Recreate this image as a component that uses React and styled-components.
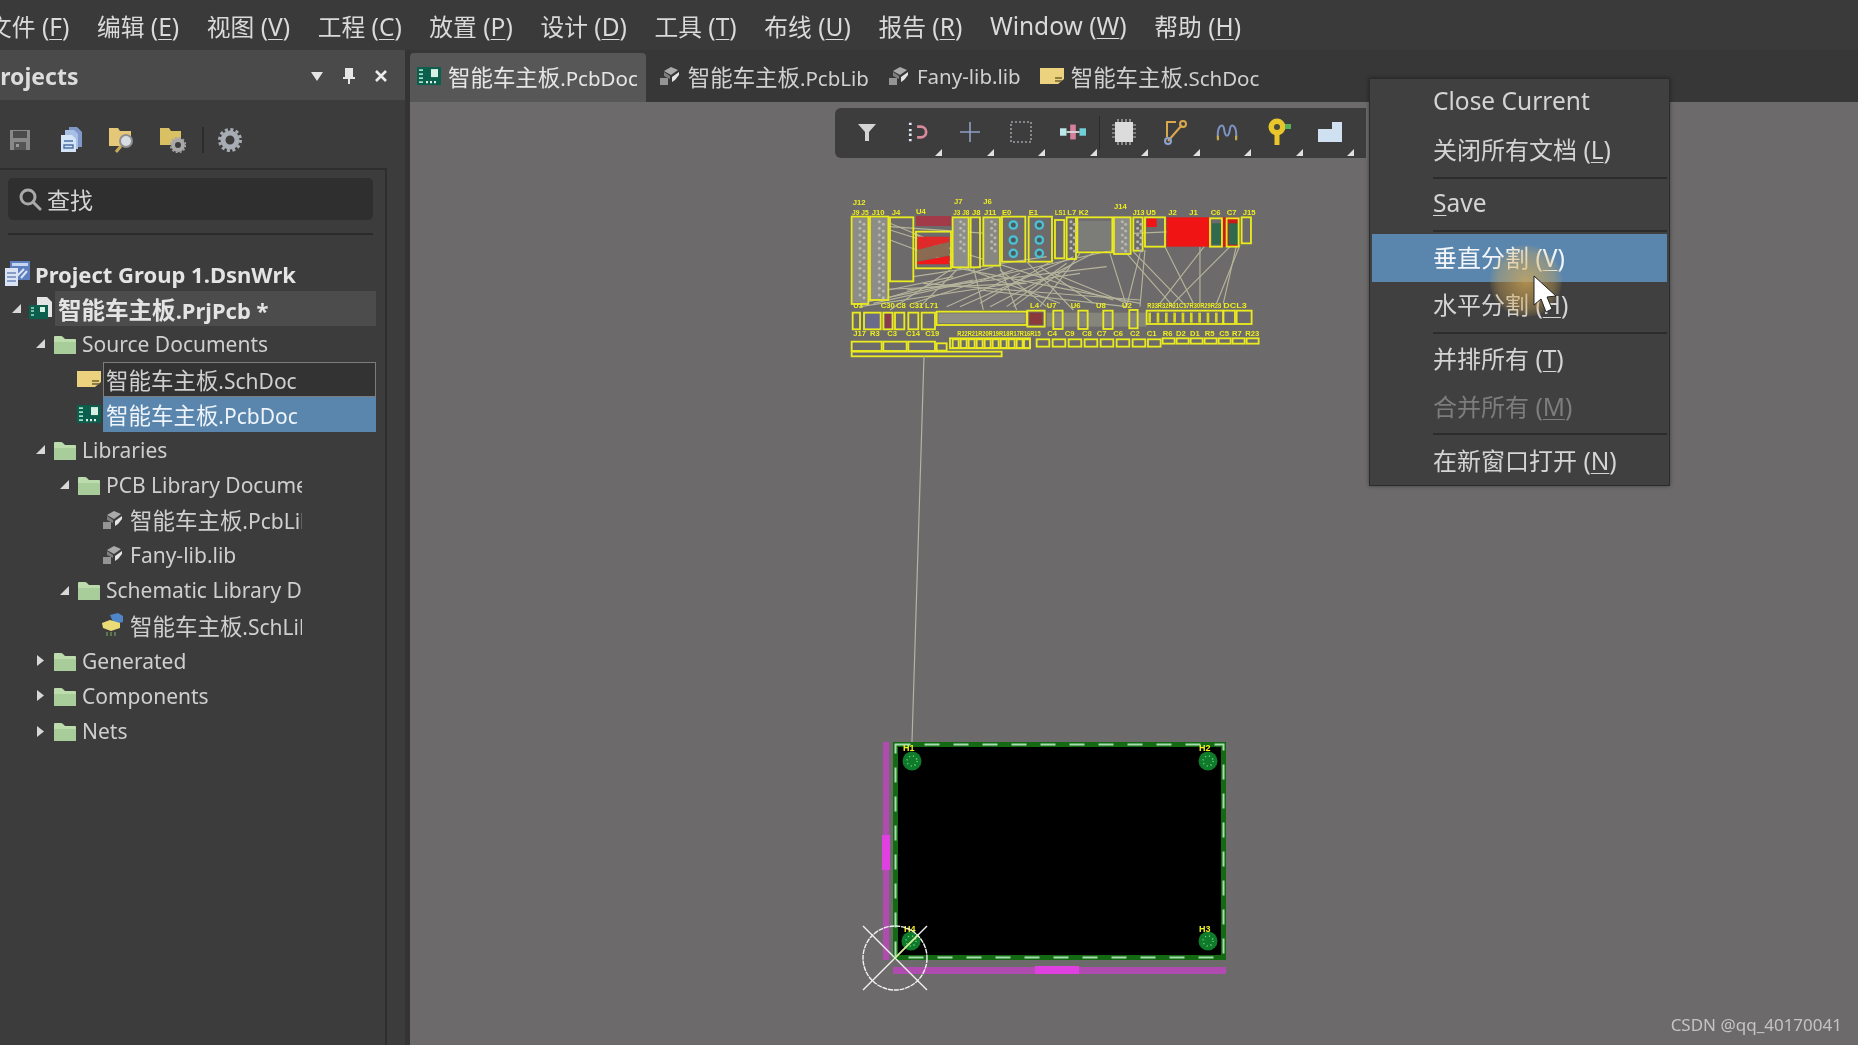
import React from "react";
import styled, { createGlobalStyle } from "styled-components";

const GlobalStyle = createGlobalStyle`
    html, body, #root {
        margin: 0;
        height: 100%;
        overflow: hidden;
        background: #3a3a3a;
    }
`;

const FONT = `"Noto Sans", "Noto Sans CJK SC", sans-serif`;

/* ---------- small icons ---------- */

const FolderIcon = () => (
    <svg width="24" height="22" viewBox="0 0 24 22">
        <path d="M2 3 h6 q1 0 2 1 l2 2 h10 q1 0 1 1 v13 q0 1 -1 1 H2 q-1 0 -1 -1 V4 q0 -1 1 -1 z" fill="#bcdcae" />
        <path d="M1 9 h22 v11 q0 1 -1 1 H2 q-1 0 -1 -1 z" fill="#a8cc9a" />
    </svg>
);

const BoardIcon = ({ size = 24 }) => (
    <svg width={size} height={size * 0.84} viewBox="0 0 24 20">
        <rect x="0" y="1" width="24" height="18" fill="#0b5f4c" />
        <path d="M2 4 h4 M2 8 h4 M2 12 h4 M2 16 h4" stroke="#9fe0c8" strokeWidth="1.6" />
        <rect x="14" y="3" width="7" height="8" fill="#d8f0e4" />
        <path d="M9 16 h12" stroke="#d8f0e4" strokeWidth="2.4" strokeDasharray="2 2" />
    </svg>
);

const ProjectBoardIcon = () => (
    <svg width="24" height="24" viewBox="0 0 24 24">
        <path d="M8 0 h10 l5 5 v15 H8 z" fill="#e4e4e4" />
        <rect x="0" y="8" width="19" height="14" fill="#0b5f4c" />
        <path d="M2 11 h3 M2 14 h3 M2 18 h3" stroke="#9fe0c8" strokeWidth="1.5" />
        <rect x="11" y="10" width="5" height="5" fill="#d8f0e4" />
    </svg>
);

const SchIcon = () => (
    <svg width="24" height="18" viewBox="0 0 24 18">
        <path d="M0 1 h24 v11 l-6 5 H0 z" fill="#ecd27e" />
        <path d="M15 11 h7 M15 14 h7" stroke="#6d6230" strokeWidth="1.5" />
    </svg>
);

const LibIcon = () => (
    <svg width="22" height="20" viewBox="0 0 22 20">
        <path d="M5 5 l7 -4 l7 3 l-7 5 z" fill="#a9a9a9" />
        <path d="M5 6 l6 4 v3 l-6 -3 z" fill="#7f7f7f" />
        <path d="M1 12 h8 v7 H1 z" fill="#949494" />
        <path d="M13 11 l7 -5 v3 l-4 5 l-3 2 z" fill="#e4e4e4" />
    </svg>
);

const SchLibIcon = () => (
    <svg width="24" height="24" viewBox="0 0 24 24">
        <path d="M9 2 l8 -2 l5 3 v6 l-9 2 z" fill="#4e86c8" />
        <path d="M1 10 l8 -3 l10 3 v5 l-9 3 l-8 -3 z" fill="#ecdc78" />
        <path d="M6 19 v4 M10 19 v4 M14 19 v4" stroke="#6b8a58" strokeWidth="1.5" />
    </svg>
);

const WorkspaceIcon = () => (
    <svg width="25" height="26" viewBox="0 0 25 26">
        <rect x="5" y="0" width="20" height="19" fill="#5d7fc0" />
        <rect x="7" y="2" width="16" height="3" fill="#c6d6f2" />
        <path d="M19 8 l-8 8 M22 10 l-6 7" stroke="#dbe4f4" strokeWidth="2" />
        <rect x="0" y="7" width="13" height="18" fill="#dbe4f4" />
        <path d="M2 12 h9 M2 16 h9 M2 20 h9" stroke="#6d86b8" strokeWidth="1.5" />
    </svg>
);

const SearchIcon = () => (
    <svg width="24" height="24" viewBox="0 0 24 24" fill="none" stroke="#a9a9a9" strokeWidth="3">
        <circle cx="10" cy="10" r="7" />
        <path d="M15 15 l7 7" strokeLinecap="round" />
    </svg>
);

const SaveIcon = () => (
    <svg width="22" height="22" viewBox="0 0 22 22">
        <path d="M1 1 h20 v20 H1 z" fill="#888" />
        <rect x="4" y="2" width="14" height="7" fill="#4b4b4b" />
        <rect x="5" y="13" width="12" height="8" fill="#555" />
        <rect x="7" y="15" width="3" height="3" fill="#999" />
    </svg>
);

const CopyDocsIcon = () => (
    <svg width="22" height="26" viewBox="0 0 22 26">
        <path d="M9 0 h8 l5 5 v15 H9 z" fill="#7f98c8" />
        <path d="M5 3 h9 l4 4 v15 H5 z" fill="#a9c0e6" />
        <path d="M1 8 h11 l4 4 v13 H1 z" fill="#d6e4f7" />
        <path d="M4 14 h9 M4 18 h9 v3 H4 z" stroke="#4b70a8" strokeWidth="1.4" fill="none" />
    </svg>
);

const FolderSearchIcon = () => (
    <svg width="26" height="26" viewBox="0 0 26 26">
        <path d="M0 1 h9 l2 3 h11 v15 H0 z" fill="#e5c77a" />
        <circle cx="17" cy="14" r="6" fill="#d7dde0" stroke="#8f8f8f" strokeWidth="2" />
        <path d="M12 19 l-5 6" stroke="#c9a95a" strokeWidth="3" />
    </svg>
);

const FolderGearIcon = () => (
    <svg width="26" height="26" viewBox="0 0 26 26">
        <path d="M0 1 h9 l2 3 h10 v14 H0 z" fill="#d9c063" />
        <circle cx="18" cy="18" r="5" fill="#3c3c3c" stroke="#a8a8a8" strokeWidth="4" />
        <circle cx="18" cy="18" r="7.5" fill="none" stroke="#a8a8a8" strokeWidth="1.5" strokeDasharray="2 2" />
    </svg>
);

const GearIcon = () => (
    <svg width="24" height="24" viewBox="0 0 24 24">
        <circle cx="12" cy="12" r="7" fill="none" stroke="#a8acb4" strokeWidth="5" />
        <circle cx="12" cy="12" r="10.5" fill="none" stroke="#a8acb4" strokeWidth="3" strokeDasharray="3 2.5" />
    </svg>
);

const TreeIcons = {
    folder: FolderIcon,
    board: BoardIcon,
    project: ProjectBoardIcon,
    sch: SchIcon,
    lib: LibIcon,
    schlib: SchLibIcon,
    workspace: WorkspaceIcon,
};

/* floating toolbar drawings */
const ToolIcons = [
    <svg key="filter" width="20" height="20" viewBox="0 0 20 20"><path d="M1 2 h18 l-7 8 v9 h-4 v-9 z" fill="#d4d4d4" /></svg>,
    <svg key="magnet" width="24" height="20" viewBox="0 0 24 22" fill="none">
        <path d="M11 5 h4 a6 6 0 0 1 0 12 h-4" stroke="#d98a9a" strokeWidth="3" />
        <path d="M2 2 h3 M2 9 h3 M2 14 h3 M2 20 h3" stroke="#dfe7f5" strokeWidth="2.6" />
    </svg>,
    <svg key="cross" width="22" height="22" viewBox="0 0 22 22"><path d="M11 1 v20 M1 11 h20" stroke="#8e9ec4" strokeWidth="1.6" /></svg>,
    <svg key="select" width="24" height="24" viewBox="0 0 24 24"><rect x="2" y="2" width="20" height="20" fill="none" stroke="#9c9ca4" strokeWidth="1.6" strokeDasharray="2 2" /></svg>,
    <svg key="align" width="26" height="18" viewBox="0 0 28 18">
        <rect x="0" y="5" width="7" height="8" fill="#bfe8ec" />
        <rect x="21" y="5" width="7" height="8" fill="#6fd0d8" />
        <rect x="11" y="1" width="6" height="16" fill="#d87f9c" />
        <path d="M7 9 h14" stroke="#d8d8d8" strokeWidth="2" />
    </svg>,
    <svg key="chip" width="24" height="26" viewBox="0 0 24 26">
        <path d="M0 6 h24 M0 10 h24 M0 14 h24 M0 18 h24" stroke="#bdbdbd" strokeWidth="1.2" />
        <path d="M6 0 v26 M10 0 v26 M14 0 v26 M18 0 v26" stroke="#bdbdbd" strokeWidth="1.2" />
        <rect x="3" y="3" width="18" height="20" fill="#dcdcdc" />
    </svg>,
    <svg key="route" width="24" height="26" viewBox="0 0 24 26" fill="none">
        <path d="M4 22 l14 -16" stroke="#d8a84a" strokeWidth="2" />
        <path d="M3 18 V3 h9" stroke="#d8a84a" strokeWidth="2" />
        <circle cx="4" cy="22" r="3" stroke="#8ea4d0" strokeWidth="2" />
        <circle cx="19" cy="5" r="3" stroke="#d8a84a" strokeWidth="2" />
    </svg>,
    <svg key="tune" width="24" height="20" viewBox="0 0 26 22" fill="none">
        <path d="M3 18 C2 6 6 3 8 4 C11 5 9 15 13 15 C17 15 15 5 18 4 C20 3 24 6 23 18" stroke="#7e94c4" strokeWidth="2.2" />
        <path d="M3 15 v5 M23 15 v5" stroke="#c8a848" strokeWidth="2.4" />
    </svg>,
    <svg key="via" width="24" height="28" viewBox="0 0 24 28">
        <circle cx="10" cy="9" r="8.5" fill="#e8c62c" />
        <circle cx="10" cy="9" r="3" fill="#4a4a3a" />
        <rect x="7.5" y="16" width="5" height="11" fill="#e8c62c" />
        <path d="M18 6 h6 v5 h-6 z" fill="#58b058" />
    </svg>,
    <svg key="polygon" width="26" height="22" viewBox="0 0 26 22"><path d="M1 8 h14 V1 h10 v20 H1 z" fill="#cfe0f0" /></svg>,
];

/* ---------- board drawing, in 3x crop units ---------- */

const upperParts = [
    [35, 80, 50, 262], [90, 80, 55, 250], [150, 82, 70, 192], [228, 125, 105, 110],
    [338, 82, 48, 150], [392, 82, 28, 150], [430, 82, 50, 145], [486, 80, 70, 135],
    [566, 80, 70, 135], [645, 90, 28, 115], [680, 82, 28, 125], [712, 82, 105, 105],
    [822, 82, 50, 110], [880, 82, 28, 100], [915, 82, 60, 88], [1110, 85, 36, 85],
    [1160, 85, 36, 85], [1205, 82, 28, 78],
];

const lowerParts = [
    [38, 368, 22, 50], [72, 368, 50, 50], [130, 368, 28, 50], [165, 368, 28, 50],
    [205, 368, 30, 50], [245, 368, 40, 50], [290, 365, 270, 40], [562, 362, 52, 48],
    [640, 362, 28, 55], [715, 362, 28, 55], [790, 362, 28, 55], [868, 360, 25, 55],
    [920, 362, 230, 40], [1150, 362, 35, 40], [1190, 362, 45, 40],
    [35, 455, 90, 28], [130, 455, 70, 28], [205, 455, 80, 28], [290, 460, 30, 22],
    [330, 445, 240, 30], [35, 485, 450, 14],
];

const smallPads = [
    ...[590, 638, 686, 734, 782, 830, 878, 924].map((x) => [x, 448, 38, 22]),
    ...[968, 1010, 1052, 1094, 1136, 1178, 1220].map((x) => [x, 445, 36, 16]),
    ...[338, 362, 386, 410, 434, 458, 482, 506, 530, 552].map((x) => [x, 448, 18, 26]),
];

const ratsnest = [
    [150, 120, 820, 330], [150, 150, 660, 340], [220, 260, 620, 200], [120, 330, 460, 230],
    [330, 230, 900, 340], [400, 230, 430, 360], [480, 230, 530, 360], [560, 215, 700, 360],
    [640, 210, 420, 340], [810, 190, 860, 350], [860, 190, 1000, 350], [880, 185, 1040, 350],
    [975, 170, 1060, 340], [1200, 165, 1130, 340], [1190, 165, 1150, 340], [1100, 160, 960, 340],
    [1080, 170, 1080, 340], [915, 180, 900, 350], [200, 300, 800, 230], [100, 340, 820, 180],
    [60, 350, 720, 250], [250, 280, 900, 330], [520, 350, 700, 220], [150, 360, 330, 240],
    [680, 220, 500, 350], [760, 190, 450, 350], [1000, 125, 880, 130], [440, 130, 150, 110],
    [220, 130, 340, 200], [150, 100, 330, 175], [145, 300, 340, 260], [85, 300, 560, 280],
    [480, 240, 620, 350], [600, 230, 760, 340], [720, 190, 600, 350], [640, 250, 860, 340],
    [540, 250, 320, 350], [700, 200, 360, 350], [1170, 170, 1000, 340], [900, 190, 860, 350],
    [220, 340, 520, 240], [60, 340, 400, 270], [420, 300, 860, 350], [350, 240, 240, 350],
];

const partLabels = [
    ["J12", 38, 46], ["J9 J5", 36, 74, 50], ["J10", 95, 74], ["J4", 155, 74], ["U4", 228, 72],
    ["J7", 342, 42], ["J6", 430, 42], ["J3 J8", 340, 74, 48], ["J8", 396, 74], ["J11", 432, 74],
    ["E0", 486, 74], ["E1", 566, 74], ["LS1", 645, 74, 32], ["L7", 682, 74], ["K2", 716, 74],
    ["J14", 822, 58], ["J13", 878, 74, 36], ["U5", 918, 74], ["J2", 985, 74], ["J1", 1048, 74],
    ["C6", 1112, 74], ["C7", 1160, 74], ["J15", 1208, 74],
    ["U3", 40, 355], ["C30", 122, 355], ["C8", 168, 355], ["C31", 208, 355], ["L71", 255, 355],
    ["L4", 570, 355], ["U7", 620, 355], ["U6", 692, 355], ["U8", 768, 355], ["U2", 846, 355],
    ["R33R32R31C17R30R29R28", 922, 355, 222], ["DCL3", 1150, 355, 70],
    ["J17", 40, 438], ["R3", 90, 438], ["C3", 142, 438], ["C14", 198, 438], ["C19", 256, 438],
    ["R22R21R20R19R18R17R16R15", 352, 438, 250], ["C4", 622, 438], ["C9", 674, 438], ["C8", 726, 438],
    ["C7", 770, 438], ["C6", 820, 438], ["C2", 870, 438], ["C1", 920, 438], ["R6", 968, 438],
    ["D2", 1008, 438], ["D1", 1050, 438], ["R5", 1094, 438], ["C5", 1138, 438], ["R7", 1176, 438], ["R23", 1216, 438],
];

const holeSpots = [[912, 761], [1208, 761], [911, 941], [1208, 941]];
const holeLabels = [["H1", 903, 751], ["H2", 1199, 751], ["H4", 904, 932], ["H3", 1199, 932]];

const dotSpots = [];
[60, 118].forEach((x) => {
    for (let y = 95; y < 325; y += 20) dotSpots.push([x, y], [x + 12, y + 8]);
});
[362, 455, 693, 847, 893].forEach((x) => {
    for (let y = 95; y < 180; y += 20) dotSpots.push([x, y], [x + 10, y + 8]);
});

const PcbDrawing = () => (
    <CanvasDrawing viewBox="410 102 1448 943">
        <g transform="translate(840 190) scale(0.3333)">
            <rect x="620" y="368" width="300" height="42" fill="#85857c" />
            {ratsnest.map(([x1, y1, x2, y2], i) => (
                <line key={i} x1={x1} y1={y1} x2={x2} y2={y2} stroke="#b5b59c" strokeWidth="3.4" />
            ))}
            <rect x="38" y="84" width="44" height="254" fill="#8c8c88" />
            <rect x="93" y="84" width="50" height="244" fill="#8c8c88" />
            <rect x="340" y="84" width="44" height="146" fill="#8c8c88" />
            <rect x="432" y="84" width="46" height="141" fill="#87877f" />
            <rect x="824" y="84" width="46" height="106" fill="#8c8c88" />
            <rect x="714" y="92" width="100" height="90" fill="#7c7c78" />
            <rect x="228" y="78" width="105" height="30" fill="#a33a4a" />
            <path d="M232 140 h96 v16 l-96 24 z" fill="#e02a2a" />
            <path d="M232 215 l96 -18 v26 h-96 z" fill="#f01818" />
            <path d="M232 180 l96 -24 v40 l-96 18 z" fill="#8a6a50" />
            <rect x="980" y="82" width="130" height="88" fill="#f01414" />
            <rect x="1146" y="82" width="50" height="88" fill="#c81c1c" />
            <rect x="1116" y="100" width="28" height="64" fill="#2f6a50" />
            <rect x="1166" y="100" width="28" height="64" fill="#2f6a50" />
            <rect x="920" y="85" width="30" height="26" fill="#f01414" />
            <rect x="72" y="372" width="50" height="44" fill="#6a6a8a" />
            <rect x="135" y="372" width="18" height="44" fill="#8a3a4a" />
            <rect x="295" y="370" width="260" height="30" fill="#8e8e84" />
            <rect x="568" y="368" width="40" height="36" fill="#8a3a3a" />
            {[...upperParts, ...lowerParts, ...smallPads].map(([x, y, w, h], i) => (
                <rect key={i} x={x} y={y} width={w} height={h} fill="none" stroke="#eaea20" strokeWidth="5.5" />
            ))}
            {dotSpots.map(([x, y], i) => (
                <circle key={i} cx={x} cy={y} r="4.5" fill="#b8b8b0" />
            ))}
            {[[520, 105], [520, 150], [520, 190], [598, 105], [598, 150], [598, 190]].map(([x, y], i) => (
                <circle key={i} cx={x} cy={y} r="11" fill="#4a5a5a" stroke="#4cc0d4" strokeWidth="7" />
            ))}
            {[925, 950, 975, 1000, 1025, 1050, 1075, 1100, 1125].map((x) => (
                <rect key={x} x={x} y="368" width="8" height="30" fill="#d8d820" />
            ))}
            {partLabels.map(([label, x, y, fit]) => (
                <PartLabel
                    key={label + x}
                    x={x}
                    y={y}
                    textLength={fit}
                    lengthAdjust={fit ? "spacingAndGlyphs" : undefined}
                >
                    {label}
                </PartLabel>
            ))}
        </g>

        <line x1="924" y1="356" x2="912" y2="742" stroke="#b3b3a6" strokeWidth="1.2" />

        <rect x="883" y="742" width="6" height="218" fill="#b04cb0" />
        <rect x="882" y="835" width="8" height="35" fill="#e040e0" />
        <rect x="893" y="967" width="333" height="7" fill="#b04cb0" />
        <rect x="1035" y="966" width="44" height="8" fill="#e040e0" />

        <rect x="893" y="742" width="333" height="218" fill="#000" />
        <rect x="895.5" y="744.5" width="328" height="213" fill="none" stroke="#136a13" strokeWidth="5" />
        <rect x="895.5" y="744.5" width="328" height="213" fill="none" stroke="#a8dcb0" strokeWidth="2" strokeDasharray="15 14" />

        {holeSpots.map(([x, y]) => (
            <g key={x + "-" + y}>
                <circle cx={x} cy={y} r="9.5" fill="#0f7a2a" />
                <circle cx={x} cy={y} r="5" fill="none" stroke="#72d890" strokeWidth="1.5" strokeDasharray="1 3" />
            </g>
        ))}
        {holeLabels.map(([label, x, y]) => (
            <HoleLabel key={label} x={x} y={y}>{label}</HoleLabel>
        ))}

        <g fill="none" stroke="#f2f2f2" strokeWidth="1.4">
            <circle cx="895" cy="958" r="32" strokeDasharray="5 0.8" />
            <path d="M863 926 L927 990 M927 926 L863 990" />
        </g>
        <line x1="895" y1="958" x2="918" y2="935" stroke="#d8f08a" strokeWidth="1.4" />
    </CanvasDrawing>
);

/* ---------- data ---------- */

const menuItems = [
    ["文件", "F"], ["编辑", "E"], ["视图", "V"], ["工程", "C"], ["放置", "P"], ["设计", "D"],
    ["工具", "T"], ["布线", "U"], ["报告", "R"], ["Window", "W"], ["帮助", "H"],
];

const tabs = [
    { icon: "board", label: "智能车主板.PcbDoc", active: true },
    { icon: "lib", label: "智能车主板.PcbLib" },
    { icon: "lib", label: "Fany-lib.lib" },
    { icon: "sch", label: "智能车主板.SchDoc" },
];

const treeRows = [
    { level: 0, icon: "workspace", label: "Project Group 1.DsnWrk", bold: true },
    { level: 1, arrow: "open", icon: "project", label: "智能车主板.PrjPcb *", bold: true, state: "project" },
    { level: 2, arrow: "open", icon: "folder", label: "Source Documents" },
    { level: 3, icon: "sch", label: "智能车主板.SchDoc", state: "focus" },
    { level: 3, icon: "board", label: "智能车主板.PcbDoc", state: "selected" },
    { level: 2, arrow: "open", icon: "folder", label: "Libraries" },
    { level: 3, arrow: "open", icon: "folder", label: "PCB Library Documents", clipped: true },
    { level: 4, icon: "lib", label: "智能车主板.PcbLib", clipped: true },
    { level: 4, icon: "lib", label: "Fany-lib.lib", clipped: true },
    { level: 3, arrow: "open", icon: "folder", label: "Schematic Library Documents", clipped: true },
    { level: 4, icon: "schlib", label: "智能车主板.SchLib", clipped: true },
    { level: 2, arrow: "closed", icon: "folder", label: "Generated" },
    { level: 2, arrow: "closed", icon: "folder", label: "Components" },
    { level: 2, arrow: "closed", icon: "folder", label: "Nets" },
];

const contextMenu = [
    { label: "Close Current" },
    { label: "关闭所有文档", key: "L", endsGroup: true },
    { label: "Save", endsGroup: true },
    { label: "垂直分割", key: "V", active: true },
    { label: "水平分割", key: "H", endsGroup: true },
    { label: "并排所有", key: "T" },
    { label: "合并所有", key: "M", disabled: true, endsGroup: true },
    { label: "在新窗口打开", key: "N" },
];

/* the video's Latin and Chinese glyphs don't share one size, so Chinese runs get their own */
const Mixed = ({ text, scale }) =>
    text.split(/([\u4e00-\u9fff]+)/).map((part, i) =>
        /[\u4e00-\u9fff]/.test(part) ? <Han key={i} $scale={scale}>{part}</Han> : part
    );

/* ---------- page ---------- */

const App = () => {
    return (
        <>
            <GlobalStyle />
            <Page>
                <MenuBar>
                    {menuItems.map(([label, key]) => (
                        <MenuEntry key={label}>
                            <Mixed text={label} scale={0.97} /> (<Mnemonic>{key}</Mnemonic>)
                        </MenuEntry>
                    ))}
                </MenuBar>
                <Body>
                    <Sidebar>
                        <PanelHeader>
                            <PanelTitle>Projects</PanelTitle>
                            <PanelActions>
                                <svg width="12" height="9" viewBox="0 0 12 9"><path d="M0 0 h12 l-6 9 z" fill="#e6e6e6" /></svg>
                                <svg width="12" height="16" viewBox="0 0 12 16"><path d="M2 0 h8 v9 h2 v2 H7 v5 H5 v-5 H0 V9 h2 z" fill="#e6e6e6" /></svg>
                                <svg width="12" height="12" viewBox="0 0 12 12"><path d="M1 1 L11 11 M11 1 L1 11" stroke="#ececec" strokeWidth="2.6" /></svg>
                            </PanelActions>
                        </PanelHeader>
                        <PanelTools>
                            <PanelTool><SaveIcon /></PanelTool>
                            <PanelTool><CopyDocsIcon /></PanelTool>
                            <PanelTool><FolderSearchIcon /></PanelTool>
                            <PanelTool><FolderGearIcon /></PanelTool>
                            <ToolDivider />
                            <PanelTool><GearIcon /></PanelTool>
                        </PanelTools>
                        <PanelInner>
                            <SearchBox>
                                <SearchIcon />
                                <span>查找</span>
                            </SearchBox>
                            <SearchRule />
                            <Tree>
                                {treeRows.map((row) => {
                                    const Icon = TreeIcons[row.icon];
                                    return (
                                        <TreeRow key={row.label + row.level} $level={row.level}>
                                            <Arrow>
                                                {row.arrow === "open" && (
                                                    <svg width="9" height="9" viewBox="0 0 9 9"><path d="M9 0 V9 H0 z" fill="#d8d8d8" /></svg>
                                                )}
                                                {row.arrow === "closed" && (
                                                    <svg width="7" height="11" viewBox="0 0 7 11"><path d="M0 0 L7 5.5 L0 11 z" fill="#d8d8d8" /></svg>
                                                )}
                                            </Arrow>
                                            <TreeIcon><Icon /></TreeIcon>
                                            <TreeLabel
                                                $level={row.level}
                                                $bold={row.bold}
                                                $state={row.state}
                                                $clipped={row.clipped}
                                            >
                                                <span><Mixed text={row.label} scale={1.07} /></span>
                                            </TreeLabel>
                                        </TreeRow>
                                    );
                                })}
                            </Tree>
                        </PanelInner>
                    </Sidebar>
                    <Main>
                        <TabBar>
                            {tabs.map((tab) => {
                                const Icon = TreeIcons[tab.icon];
                                return (
                                    <Tab key={tab.label} $active={tab.active}>
                                        <Icon />
                                        <span><Mixed text={tab.label} scale={1.095} /></span>
                                    </Tab>
                                );
                            })}
                        </TabBar>
                        <Canvas>
                            <PcbDrawing />
                            <Watermark>CSDN @qq_40170041</Watermark>
                        </Canvas>
                    </Main>
                </Body>

                <FloatingToolbar>
                    {ToolIcons.map((icon, i) => (
                        <React.Fragment key={i}>
                            {i === 5 && <ToolbarDivider />}
                            <ToolButton $corner={i > 0}>{icon}</ToolButton>
                        </React.Fragment>
                    ))}
                </FloatingToolbar>

                <ContextMenu>
                    {contextMenu.map((item) => (
                        <ContextItem key={item.label} $active={item.active} $disabled={item.disabled} $rule={item.endsGroup}>
                            <span>
                                {item.label === "Save" ? (
                                    <>
                                        <Mnemonic>S</Mnemonic>ave
                                    </>
                                ) : (
                                    <Mixed text={item.label} scale={0.98} />
                                )}
                                {item.key && (
                                    <>
                                        {" "}(<Mnemonic>{item.key}</Mnemonic>)
                                    </>
                                )}
                            </span>
                        </ContextItem>
                    ))}
                </ContextMenu>

                <PointerGlow />
                <Pointer viewBox="0 0 24 40" width="24" height="40">
                    <path d="M1 1 L1 30 L8 24 L13 37 L19 34 L14 22 L23 21 z" fill="#fff" stroke="#222" strokeWidth="1" />
                </Pointer>
            </Page>
        </>
    );
};

const Page = styled.div`
    position: relative;
    display: flex;
    flex-direction: column;
    width: 1858px;
    height: 1045px;
    overflow: hidden;
    font-family: ${FONT};
    color: #d6d6d6;
    background: #3a3a3a;
    filter: blur(0.7px);
`;

const Han = styled.span`
    font-size: ${(p) => p.$scale}em;
`;

const MenuBar = styled.div`
    display: flex;
    align-items: center;
    gap: 27.6px;
    flex: 0 0 50px;
    margin-left: -12px;
    font-size: 24.5px;
    white-space: nowrap;
    color: #dadada;
`;

const MenuEntry = styled.span``;

const Mnemonic = styled.span`
    text-decoration: underline;
    text-decoration-thickness: 1px;
    text-underline-offset: 3px;
`;

const Body = styled.div`
    display: flex;
    flex: 1;
    min-height: 0;
`;

const Sidebar = styled.div`
    display: flex;
    flex-direction: column;
    flex: 0 0 405px;
    margin-right: 5px;
    background: #3c3c3c;
    box-shadow: 5px 0 0 #343434;
    overflow: hidden;
`;

const PanelHeader = styled.div`
    display: flex;
    align-items: center;
    justify-content: space-between;
    flex: 0 0 50px;
    padding-top: 2px;
    box-sizing: border-box;
    background: #4a4a4a;
`;

const PanelTitle = styled.span`
    margin-left: -14px;
    font-size: 23px;
    font-weight: 700;
    color: #dcdcdc;
`;

const PanelActions = styled.div`
    display: flex;
    align-items: center;
    gap: 20px;
    margin-right: 18px;
`;

const PanelTools = styled.div`
    display: flex;
    align-items: center;
    flex: 0 0 68px;
    padding: 12px 0 0 7px;
    gap: 25px;
    box-sizing: border-box;
`;

const PanelTool = styled.span`
    display: flex;
    width: 26px;
    justify-content: center;
`;

const ToolDivider = styled.span`
    width: 2px;
    height: 26px;
    margin: 0 -12px 0 -9px;
    background: #2c2c2c;
`;

const PanelInner = styled.div`
    display: flex;
    flex-direction: column;
    flex: 1;
    width: 387px;
    box-sizing: border-box;
    padding: 8px 12px 0 8px;
    border-top: 2px solid #2e2e2e;
    border-right: 2px solid #2e2e2e;
`;

const SearchBox = styled.div`
    display: flex;
    align-items: center;
    gap: 5px;
    height: 42px;
    padding: 0 10px;
    flex: none;
    box-sizing: border-box;
    border-radius: 5px;
    background: #2f2f2f;
    font-size: 23px;
    color: #d4d4d4;
`;

const SearchRule = styled.div`
    height: 2px;
    margin-top: 13px;
    flex: none;
    background: #2b2b2b;
`;

const Tree = styled.div`
    display: flex;
    flex-direction: column;
    margin: 21px -8px 0 -8px;
`;

const TreeRow = styled.div`
    display: flex;
    align-items: center;
    height: 35.2px;
    flex: none;
    margin-left: ${(p) => p.$level * 24 - 15}px;
`;

const Arrow = styled.span`
    display: flex;
    align-items: center;
    justify-content: center;
    flex: 0 0 20px;
    padding-right: 6px;
    box-sizing: border-box;
`;

const TreeIcon = styled.span`
    display: flex;
    align-items: center;
    justify-content: center;
    flex: 0 0 24px;
`;

const treeLabelState = {
    project: "background: #4c4c4c;",
    focus: "background: #333; box-shadow: inset 0 0 0 1px #7c7c7c;",
    selected: "background: #5a86ad; color: #eef4fa;",
};

const TreeLabel = styled.span`
    display: flex;
    align-items: center;
    height: 100%;
    padding-left: 3px;
    margin-left: 2px;
    white-space: nowrap;
    overflow: hidden;
    box-sizing: border-box;
    font-size: ${(p) => (p.$bold ? "22px" : "21px")};
    font-weight: ${(p) => (p.$bold ? 700 : 400)};
    color: ${(p) => (p.$bold ? "#e4e4e4" : "#cfcfcf")};
    ${(p) => (p.$clipped ? `max-width: ${305 - (34 + 24 * p.$level)}px;` : "")}
    ${(p) => (p.$state ? `flex: 1; margin-right: 5px; ${treeLabelState[p.$state]}` : "")}
`;

const Main = styled.div`
    display: flex;
    flex-direction: column;
    flex: 1;
    min-width: 0;
`;

const TabBar = styled.div`
    display: flex;
    align-items: stretch;
    flex: 0 0 52px;
    padding-top: 3px;
    box-sizing: border-box;
    background: #373737;
`;

const Tab = styled.div`
    display: flex;
    align-items: center;
    gap: 7px;
    padding: 0 ${(p) => (p.$active ? "8px" : "6px")} 3px 7px;
    margin-right: 6px;
    border-radius: 4px 4px 0 0;
    font-size: 20.5px;
    white-space: nowrap;
    color: ${(p) => (p.$active ? "#e6e6e6" : "#d0d0d0")};
    background: ${(p) => (p.$active ? "#575757" : "transparent")};
`;

const Canvas = styled.div`
    position: relative;
    flex: 1;
    background: #6c6a6a;
`;

const CanvasDrawing = styled.svg`
    position: absolute;
    inset: 0;
    width: 100%;
    height: 100%;
`;

const PartLabel = styled.text`
    font-family: "Liberation Sans", sans-serif;
    font-size: 23px;
    font-weight: 700;
    fill: #eeee20;
`;

const HoleLabel = styled.text`
    font-family: "Liberation Sans", sans-serif;
    font-size: 9px;
    font-weight: 700;
    fill: #f0f020;
`;

const Watermark = styled.div`
    position: absolute;
    right: 16px;
    bottom: 9px;
    font-size: 17px;
    color: #c4c4c4;
`;

const FloatingToolbar = styled.div`
    position: absolute;
    left: 835px;
    top: 108px;
    display: flex;
    align-items: stretch;
    height: 50px;
    padding: 0 10px 0 6px;
    border-radius: 6px 0 0 6px;
    background: #3d3d3d;
`;

const ToolButton = styled.div`
    position: relative;
    display: flex;
    align-items: center;
    justify-content: center;
    width: 51.5px;
    padding-bottom: 2px;
    box-sizing: border-box;

    ${(p) =>
        p.$corner
            ? `&::after {
        content: "";
        position: absolute;
        right: 2px;
        bottom: 2px;
        border-style: solid;
        border-width: 0 0 7px 7px;
        border-color: transparent transparent #e0e0e0 transparent;
    }`
            : ""}
`;

const ToolbarDivider = styled.div`
    width: 1px;
    margin: 8px -1px 8px 0;
    background: #2b2b2b;
`;

const ContextMenu = styled.div`
    position: absolute;
    left: 1369px;
    top: 78px;
    width: 301px;
    padding: 0 2px;
    box-sizing: border-box;
    display: flex;
    flex-direction: column;
    border: 1px solid #2b2b2b;
    background: #404040;
    box-shadow: 0 0 4px rgba(0, 0, 0, 0.4);
    font-size: 24.5px;
`;

const ContextItem = styled.div`
    position: relative;
    display: flex;
    align-items: center;
    white-space: pre;
    height: 47.75px;
    flex: none;
    box-sizing: border-box;
    padding: 0 0 4px 61px;
    margin-bottom: ${(p) => (p.$rule ? "6px" : "0")};
    color: ${(p) => (p.$disabled ? "#7d7d7d" : p.$active ? "#f2f6fa" : "#d4d4d4")};
    background: ${(p) => (p.$active ? "#5a86ad" : "transparent")};

    ${(p) =>
        p.$rule
            ? `&::after {
        content: "";
        position: absolute;
        left: 61px;
        right: 0;
        bottom: -4px;
        height: 2px;
        background: #2c2c2c;
    }`
            : ""}
`;

const PointerGlow = styled.div`
    position: absolute;
    left: 1490px;
    top: 245px;
    width: 72px;
    height: 72px;
    border-radius: 50%;
    background: radial-gradient(circle, rgba(214, 170, 84, 0.75) 0%, rgba(214, 170, 84, 0.35) 55%, rgba(214, 170, 84, 0) 75%);
`;

const Pointer = styled.svg`
    position: absolute;
    left: 1533px;
    top: 275px;
`;

export default App;
